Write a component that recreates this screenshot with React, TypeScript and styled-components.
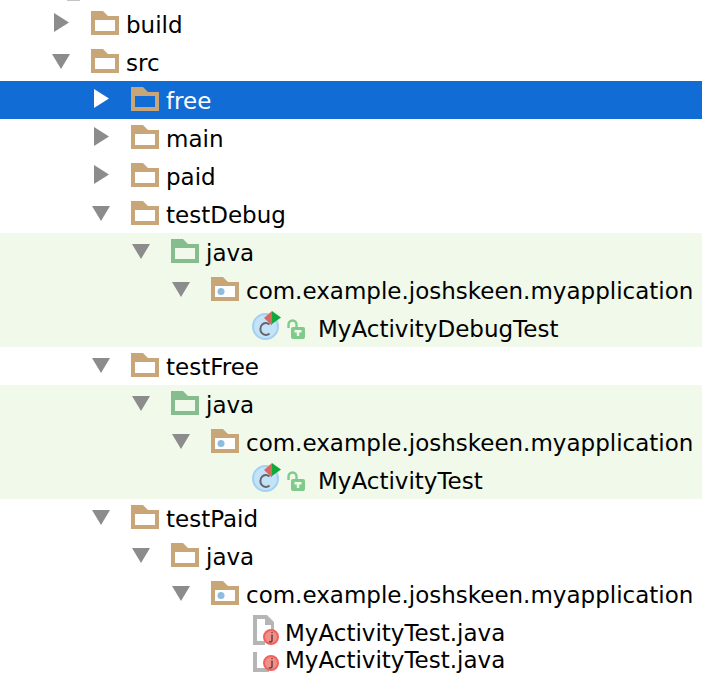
import styled, { createGlobalStyle } from "styled-components";

const GlobalStyle = createGlobalStyle`
  html, body {
    margin: 0;
    padding: 0;
    background: #ffffff;
  }
`;

const Tree = styled.div`
  width: 702px;
  height: 678px;
  overflow: hidden;
  padding-top: 5px;
  box-sizing: border-box;
  position: relative;
  font-family: "DejaVu Sans", "Liberation Sans", sans-serif;
  font-size: 23px;
  color: #000;
`;

const TopStub = styled.div`
  position: absolute;
  top: 0;
  left: 67px;
  width: 13px;
  height: 1px;
  background: #c4c4c4;
`;

const Row = styled.div<{ $depth: number; $tone?: "selected" | "test"; $stacked?: boolean }>`
  display: flex;
  align-items: center;
  height: ${(p) => (p.$stacked ? 28 : 38)}px;
  margin-top: ${(p) => (p.$stacked ? -6 : 0)}px;
  padding-left: ${(p) => 52 + p.$depth * 40}px;
  box-sizing: border-box;
  white-space: nowrap;
  background: ${(p) =>
    p.$tone === "selected" ? "#116cd6" : p.$tone === "test" ? "#f0f9ea" : "transparent"};
  color: ${(p) => (p.$tone === "selected" ? "#fff" : "#000")};
`;

const ArrowSlot = styled.svg`
  width: 18px;
  height: 20px;
  margin-right: 21px;
  margin-bottom: 2px;
  flex: none;
`;

const FolderSlot = styled.svg`
  width: 28px;
  height: 24px;
  margin-right: 7px;
  margin-bottom: 2px;
  flex: none;
`;

const ClassSlot = styled.svg`
  width: 31px;
  height: 34px;
  margin-left: 39px;
  margin-right: 5px;
  flex: none;
`;

const LockSlot = styled.svg`
  width: 18px;
  height: 20px;
  margin-top: 1px;
  margin-right: 13px;
  flex: none;
`;

const FileSlot = styled.svg`
  width: 28px;
  height: 34px;
  margin-left: 80px;
  margin-right: 5px;
  flex: none;
`;

const Label = styled.span`
  line-height: 1;
  padding-top: 2px;
`;

type ArrowProps = { open?: boolean; color?: string };

const Arrow = ({ open, color = "#8c8c8c" }: ArrowProps) => (
  <ArrowSlot viewBox="0 0 18 20">
    <path d={open ? "M0 3h18L9 18z" : "M2 0l15 9.5L2 19z"} fill={color} />
  </ArrowSlot>
);

type FolderProps = { kind?: "plain" | "source" | "package"; inner?: string };

const Folder = ({ kind = "plain", inner = "#ffffff" }: FolderProps) => {
  const edge = kind === "source" ? "#86bd8e" : "#c8a677";
  return (
    <FolderSlot viewBox="0 0 28 24">
      <path d="M0 0h12l5 5h11v19H0z" fill={edge} />
      <rect x="4" y="9" width="20" height="11" fill={inner} />
      {kind === "package" && <circle cx="10" cy="14.5" r="3.5" fill="#8dbcdc" />}
    </FolderSlot>
  );
};

const ClassIcon = () => (
  <ClassSlot viewBox="0 0 31 34">
    <circle cx="14.5" cy="15.5" r="12.5" fill="#c3e3f8" stroke="#a3d0f2" strokeWidth="2" />
    <path d="M18.5 13.5a5.5 6 0 1 0 0 9" fill="none" stroke="#66666a" strokeWidth="2" />
    <path d="M21 0v14.5L13 7z" fill="#d8695c" />
    <path d="M21 0l9 6.5-9 6.5z" fill="#11a83c" />
  </ClassSlot>
);

const LockIcon = () => (
  <LockSlot viewBox="0 0 18 20">
    <path d="M1.5 9V5.5a4 4 0 0 1 8 0V8" fill="none" stroke="#7fcb8a" strokeWidth="2.4" />
    <rect x="4" y="8" width="14" height="12" rx="2" fill="#7fcb8a" />
    <path d="M7.5 11h7v2.4h-2.3V17H9.8v-3.6H7.5z" fill="#f0f9ea" />
  </LockSlot>
);

const FileIcon = ({ cut }: { cut?: boolean }) => (
  <FileSlot viewBox="0 0 28 34">
    {cut ? (
      <path d="M1 10h4v16h12v4H1z" fill="#b5b5b5" />
    ) : (
      <path d="M1 0h14l7 7v9h-3V10h-6V4H5v22h8v4H1z" fill="#b5b5b5" />
    )}
    <circle cx="19" cy={cut ? 21 : 22} r="7" fill="#f0908a" stroke="#f0625c" strokeWidth="2" />
    <path
      d={
        cut
          ? "M20 18.5v6a1.8 1.8 0 0 1-3 1M20 16v1"
          : "M20 19.5v6a1.8 1.8 0 0 1-3 1M20 17v1"
      }
      fill="none"
      stroke="#6b3c3c"
      strokeWidth="1.5"
    />
  </FileSlot>
);

const PackageRow = ({ tone }: { tone?: "test" }) => (
  <Row $depth={3} $tone={tone}>
    <Arrow open />
    <Folder kind="package" />
    <Label>com.example.joshskeen.myapplication</Label>
  </Row>
);

const TestClassRow = ({ name }: { name: string }) => (
  <Row $depth={4} $tone="test">
    <ClassIcon />
    <LockIcon />
    <Label>{name}</Label>
  </Row>
);

export default function App() {
  return (
    <Tree>
      <GlobalStyle />
      <TopStub />
      <Row $depth={0}>
        <Arrow />
        <Folder />
        <Label>build</Label>
      </Row>
      <Row $depth={0}>
        <Arrow open />
        <Folder />
        <Label>src</Label>
      </Row>
      <Row $depth={1} $tone="selected">
        <Arrow color="#ffffff" />
        <Folder inner="#116cd6" />
        <Label>free</Label>
      </Row>
      <Row $depth={1}>
        <Arrow />
        <Folder />
        <Label>main</Label>
      </Row>
      <Row $depth={1}>
        <Arrow />
        <Folder />
        <Label>paid</Label>
      </Row>
      <Row $depth={1}>
        <Arrow open />
        <Folder />
        <Label>testDebug</Label>
      </Row>
      <Row $depth={2} $tone="test">
        <Arrow open />
        <Folder kind="source" inner="#f0f9ea" />
        <Label>java</Label>
      </Row>
      <PackageRow tone="test" />
      <TestClassRow name="MyActivityDebugTest" />
      <Row $depth={1}>
        <Arrow open />
        <Folder />
        <Label>testFree</Label>
      </Row>
      <Row $depth={2} $tone="test">
        <Arrow open />
        <Folder kind="source" inner="#f0f9ea" />
        <Label>java</Label>
      </Row>
      <PackageRow tone="test" />
      <TestClassRow name="MyActivityTest" />
      <Row $depth={1}>
        <Arrow open />
        <Folder />
        <Label>testPaid</Label>
      </Row>
      <Row $depth={2}>
        <Arrow open />
        <Folder />
        <Label>java</Label>
      </Row>
      <PackageRow />
      <Row $depth={3}>
        <FileIcon />
        <Label>MyActivityTest.java</Label>
      </Row>
      <Row $depth={3} $stacked>
        <FileIcon cut />
        <Label>MyActivityTest.java</Label>
      </Row>
    </Tree>
  );
}
